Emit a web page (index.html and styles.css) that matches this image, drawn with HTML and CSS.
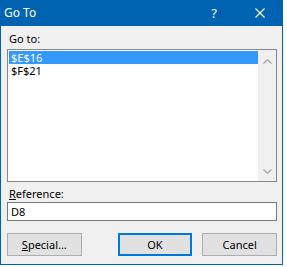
FILE: index.html
```html
<!DOCTYPE html>
<html lang="en">
<head>
  <meta charset="UTF-8" />
  <title>Go To</title>
  <link rel="stylesheet" href="styles.css">
</head>
<body>
  <div class="dialog">
    <div class="titlebar">
      <span class="title">Go To</span>
      <span class="tb-btn help">?</span>
      <span class="tb-btn close">
        <svg width="10" height="10" viewBox="0 0 10 10"><path d="M0.5 0.5 L9.5 9.5 M9.5 0.5 L0.5 9.5" stroke="#fff" stroke-width="1.1" fill="none"/></svg>
      </span>
    </div>

    <div class="content">
      <div class="lbl goto-lbl">Go to:</div>

      <div class="listbox">
        <ul class="items">
          <li class="selected">$E$16</li>
          <li>$F$21</li>
        </ul>
        <div class="scrollbar">
          <svg width="9" height="5" viewBox="0 0 9 5"><path d="M0.5 4.5 L4.5 0.8 L8.5 4.5" stroke="#a3a3a3" stroke-width="1.2" fill="none"/></svg>
          <svg width="9" height="5" viewBox="0 0 9 5"><path d="M0.5 0.5 L4.5 4.2 L8.5 0.5" stroke="#a3a3a3" stroke-width="1.2" fill="none"/></svg>
        </div>
      </div>

      <div class="lbl ref-lbl"><u>R</u>eference:</div>
      <div class="textbox">D8</div>

      <div class="buttons">
        <button class="btn"><u>S</u>pecial...</button>
        <button class="btn btn-default">OK</button>
        <button class="btn">Cancel</button>
      </div>
    </div>
  </div>
</body>
</html>
```

FILE: styles.css
```css
body {
  margin: 0;
  background: #fff;
  font-family: 'Noto Sans', sans-serif;
  font-size: 11px;
  color: #000;
}
.dialog {
  width: 283px;
  height: 265px;
  display: flex;
  flex-direction: column;
}
.titlebar {
  height: 26px;
  background: #0063b1;
  color: #fff;
  display: flex;
  align-items: center;
  font-size: 12px;
}
.title {
  flex: 1;
  padding-left: 4px;
  padding-bottom: 1px;
}
.tb-btn {
  width: 46px;
  height: 26px;
  display: flex;
  align-items: center;
  justify-content: center;
}
.help {
  font-size: 13px;
}
.close svg {
  display: block;
}
.content {
  flex: 1;
  background: #f0f0f0;
  border: 1px solid #0063b1;
  border-top: 0;
  padding: 0 5px 0 6px;
  display: flex;
  flex-direction: column;
}
.lbl {
  line-height: 15px;
  padding-left: 2px;
}
.goto-lbl {
  margin-top: 5px;
}
.listbox {
  margin-top: 3px;
  height: 133px;
  box-sizing: border-box;
  border: 1px solid #828790;
  background: #fff;
  display: flex;
  padding: 1px 0 1px 1px;
}
.items {
  flex: 1;
  list-style: none;
  margin: 0;
  padding: 0;
}
.items li {
  height: 13px;
  line-height: 13px;
  padding-left: 2px;
}
.items li.selected {
  background: #3399ff;
  color: #fff;
}
.scrollbar {
  width: 18px;
  margin: -1px 0;
  background: #f0f0f0;
  display: flex;
  flex-direction: column;
  justify-content: space-between;
  align-items: center;
  padding: 9px 0 7px;
}
.scrollbar svg {
  display: block;
}
.ref-lbl {
  margin-top: 4px;
}
.textbox {
  margin-top: 1px;
  height: 19px;
  box-sizing: border-box;
  border: 1px solid #7a7a7a;
  background: #fff;
  line-height: 17px;
  padding-left: 3px;
}
.buttons {
  margin-top: 12px;
  display: flex;
  gap: 10px;
}
.btn {
  width: 75px;
  height: 23px;
  box-sizing: border-box;
  border: 1px solid #adadad;
  background: #e1e1e1;
  font-family: inherit;
  font-size: 11px;
  color: #000;
  padding: 0;
}
.btn:first-child {
  margin-right: 26px;
}
.btn-default {
  border: 2px solid #0078d7;
}
```
